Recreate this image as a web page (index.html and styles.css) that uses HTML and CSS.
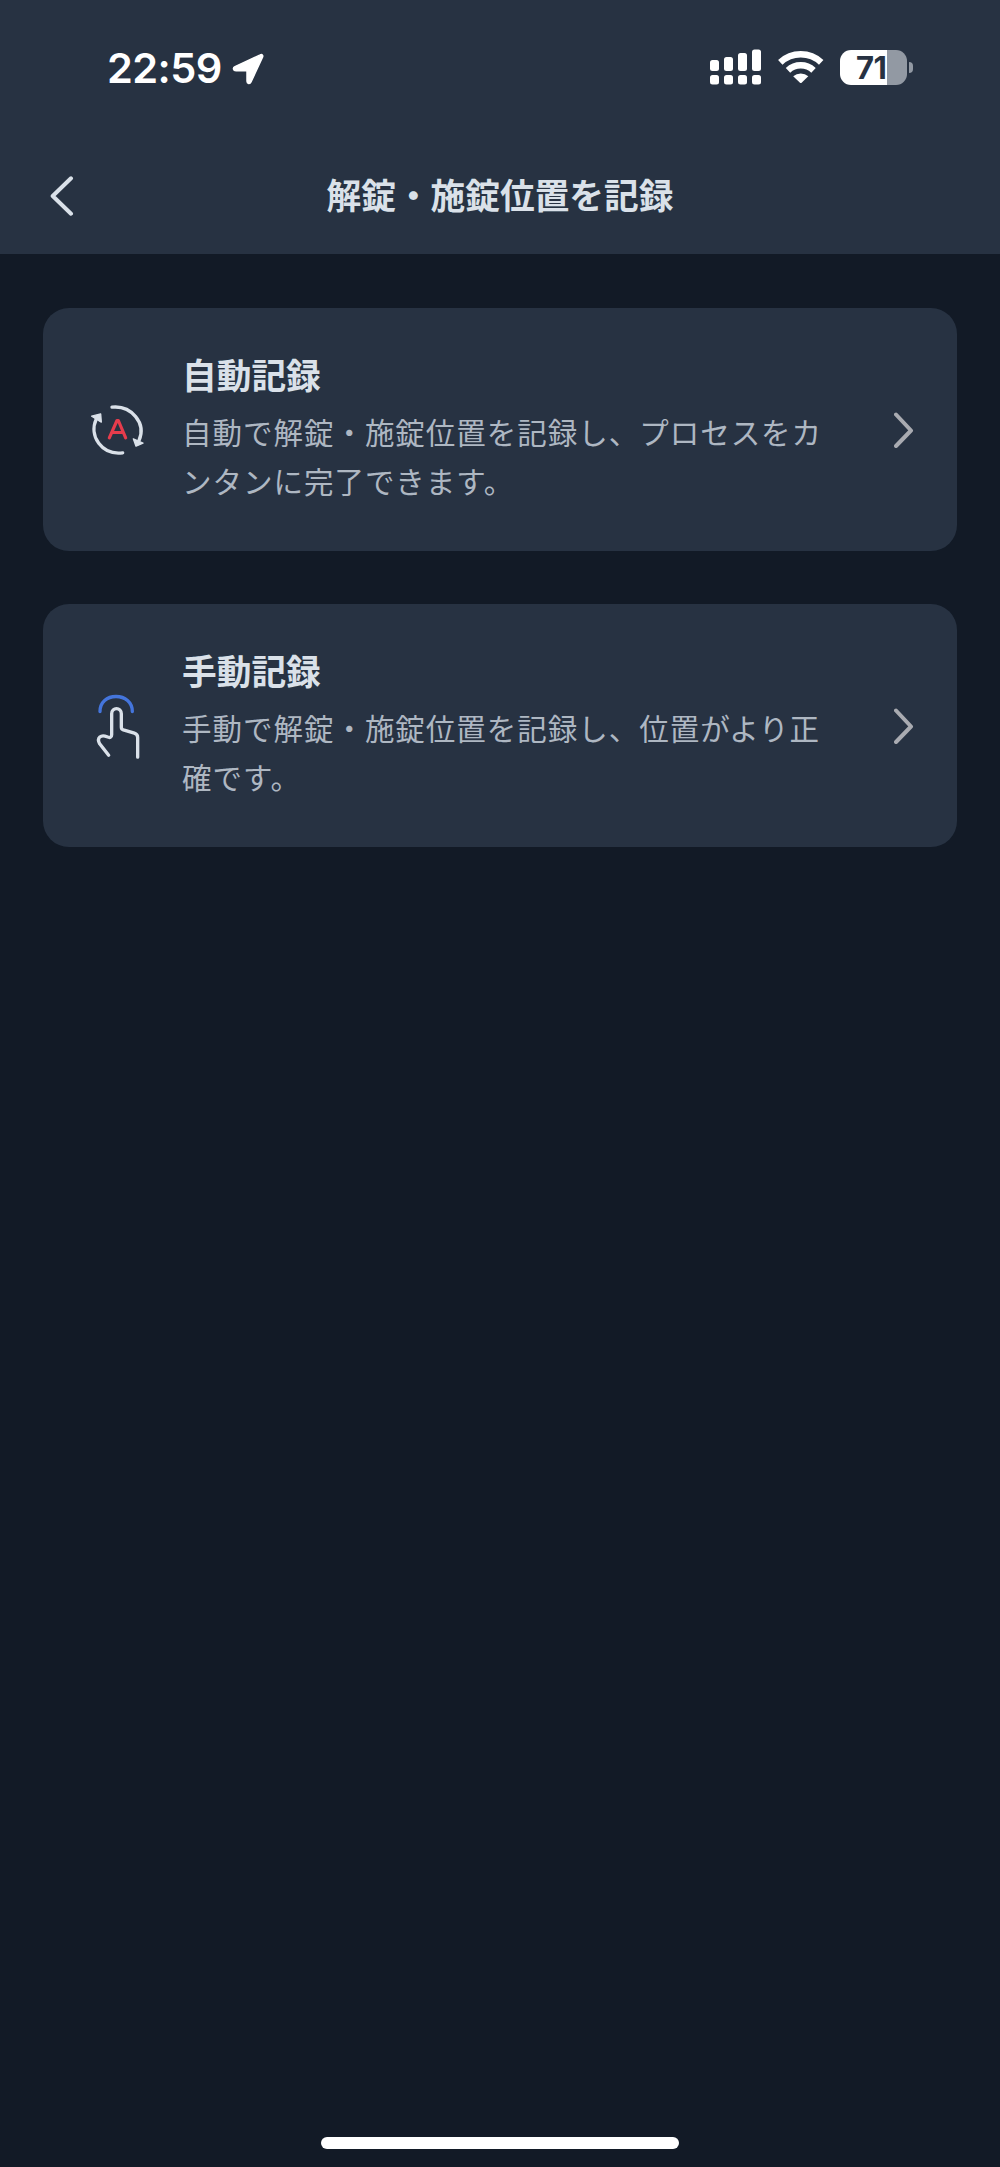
FILE: index.html
```html
<!DOCTYPE html>
<html lang="ja">
<head>
<meta charset="utf-8">
<title>解錠・施錠位置を記録</title>
<link rel="stylesheet" href="styles.css">
</head>
<body>
<div class="screen">
  <header class="header">
    <div class="status">
      <div class="clock">
        <span class="time">22:59</span>
        <svg class="location" width="36" height="36" viewBox="0 0 36 36"><path d="M5 16.6 30.2 4.9C32 4 33.3 5.400 32.500 7.100L21 32C20 34.200 17 33.800 17 31.300V21.600Q17 20.700 16.100 20.700H6C3.100 20.700 2.600 17.700 5 16.600Z" fill="#fff" stroke="#fff" stroke-width="1.500"/></svg>
      </div>
      <div class="indicators">
        <svg width="52" height="36" viewBox="0 0 52 36" fill="#fff">
          <rect x="0" y="11" width="9" height="11" rx="2.500"/><rect x="14" y="8" width="9" height="14" rx="2.500"/><rect x="28" y="4" width="9" height="18" rx="2.500"/><rect x="42" y="0.500" width="9" height="21.500" rx="2.500"/>
          <rect x="0" y="26" width="9" height="9.500" rx="2.500"/><rect x="14" y="26" width="9" height="9.500" rx="2.500"/><rect x="28" y="26" width="9" height="9.500" rx="2.500"/><rect x="42" y="26" width="9" height="9.500" rx="2.500"/>
        </svg>
        <svg class="wifi" width="46" height="36" viewBox="0 0 46 36">
          <g fill="none" stroke="#fff" stroke-width="6.500"><path d="M2.300 13.300A30 30 0 0 1 43.200 13.300"/><path d="M10 21.300A18.700 18.700 0 0 1 35.500 21.300"/></g>
          <path d="M15.200 27.300A11.500 11.500 0 0 1 30.300 27.300L23.600 33.700Q22.800 34.400 22 33.700Z" fill="#fff"/>
        </svg>
        <div class="battery"><div class="cell"><span class="level">71</span></div><div class="nub"></div></div>
      </div>
    </div>
    <nav class="navbar">
      <svg class="back" width="26" height="40" viewBox="0 0 26 40"><path d="M22 2.300 3.700 20 22 37.700" fill="none" stroke="#dae1e9" stroke-width="4" stroke-linecap="round" stroke-linejoin="round"/></svg>
      <h1 class="title">解錠・施錠位置を記録</h1>
    </nav>
  </header>
  <main class="options">
    <section class="card">
      <svg class="icon" viewBox="51 40.500 180 216">
        <g fill="none" stroke="#dae1e9" stroke-width="10" stroke-linecap="round"><path d="M126 80C184 74 230 128 207 180"/><path d="M158 217C96 225 55 167 79 115"/></g>
        <g fill="#dae1e9" stroke="#dae1e9" stroke-width="4" stroke-linejoin="round"><path d="M65 107 92 100 94 125Z"/><path d="M190 175 219 188 198 197Z"/></g>
        <path d="M118 172 141 120H145L167 172M126 156H160" fill="none" stroke="#e63c4c" stroke-width="9.500" stroke-linecap="round" stroke-linejoin="round"/>
      </svg>
      <div class="copy">
        <h2 class="name">自動記録</h2>
        <p class="desc">自動で解錠・施錠位置を記録し、プロセスをカンタンに完了できます。</p>
      </div>
      <svg class="chevron" width="20" height="36" viewBox="0 0 20 36"><path d="M2 2.500 17 18.500 2 34" fill="none" stroke="#a9abb1" stroke-width="4" stroke-linecap="round" stroke-linejoin="round"/></svg>
    </section>
    <section class="card">
      <svg class="icon" viewBox="51 43.500 180 216">
        <path d="M90 108C90 80 111 63 138 63S187 80 187 108" fill="none" stroke="#4475dc" stroke-width="10" stroke-linecap="round"/>
        <path d="M116 239 89 205C79 187 93 176 111 184Q125 190 125 178V115C125 94 154 94 154 115V155Q154 161 160 163L193 173Q203 176 203 186V245" fill="none" stroke="#dae1e9" stroke-width="10" stroke-linecap="round" stroke-linejoin="round"/>
      </svg>
      <div class="copy">
        <h2 class="name">手動記録</h2>
        <p class="desc">手動で解錠・施錠位置を記録し、位置がより正確です。</p>
      </div>
      <svg class="chevron" width="20" height="36" viewBox="0 0 20 36"><path d="M2 2.500 17 18.500 2 34" fill="none" stroke="#a9abb1" stroke-width="4" stroke-linecap="round" stroke-linejoin="round"/></svg>
    </section>
  </main>
  <div class="home-indicator"></div>
</div>
</body>
</html>
```
FILE: styles.css
```css
* { box-sizing: border-box; }
body { margin: 0; background: #121a26; }
h1, h2, p { margin: 0; }
svg { display: block; flex: none; }

.screen {
  display: flex;
  flex-direction: column;
  width: 1000px;
  height: 2167px;
  background: #121a26;
  font-family: "Noto Sans CJK JP", sans-serif;
}

.header { height: 254px; background: #273242; }

.status {
  display: flex;
  justify-content: space-between;
  align-items: center;
  height: 134px;
  padding: 0 87px 0 107px;
}
.clock { display: flex; align-items: center; gap: 8px; padding-top: 2px; }
.time {
  color: #fff;
  font: 600 41.500px/50px Inter, sans-serif;
  letter-spacing: -0.6px;
}
.indicators { display: flex; align-items: center; gap: 16px; }
.battery { display: flex; align-items: center; gap: 2px; }
.cell {
  width: 67px;
  height: 35px;
  padding-left: 16px;
  border-radius: 11px;
  background: linear-gradient(90deg, #fff 47px, #9299a3 47px);
}
.level {
  display: block;
  color: #273242;
  font: 700 31px/36px Inter, sans-serif;
  letter-spacing: -0.5px;
}
.nub { width: 4px; height: 11px; border-radius: 0 4px 4px 0; background: #9299a3; }

.navbar {
  display: grid;
  grid-template-columns: 26px 1fr 26px;
  align-items: center;
  height: 120px;
  padding: 0 49px;
}
.back { margin-top: 3px; }
.title {
  color: #dae1e9;
  font-size: 34.700px;
  font-weight: 700;
  line-height: 50px;
  text-align: center;
}

.options {
  display: flex;
  flex: 1;
  flex-direction: column;
  gap: 53px;
  padding: 54px 43px 0;
}
.card {
  display: flex;
  align-items: center;
  height: 243px;
  padding: 0 43px 0 44px;
  border-radius: 26px;
  background: #273242;
}
.icon { width: 60px; height: 72px; }
.copy { width: 660px; margin-left: 35px; padding-bottom: 5px; }
.chevron { margin-left: auto; }
.name {
  color: #dae1e9;
  font-size: 34.700px;
  font-weight: 700;
  line-height: 50px;
}
.desc {
  margin-top: 8px;
  color: #aeb7c2;
  font-size: 29.500px;
  line-height: 49px;
  letter-spacing: 0.980px;
}

.home-indicator {
  width: 358px;
  height: 12px;
  margin: 0 auto 18px;
  border-radius: 6px;
  background: #fff;
}
```
